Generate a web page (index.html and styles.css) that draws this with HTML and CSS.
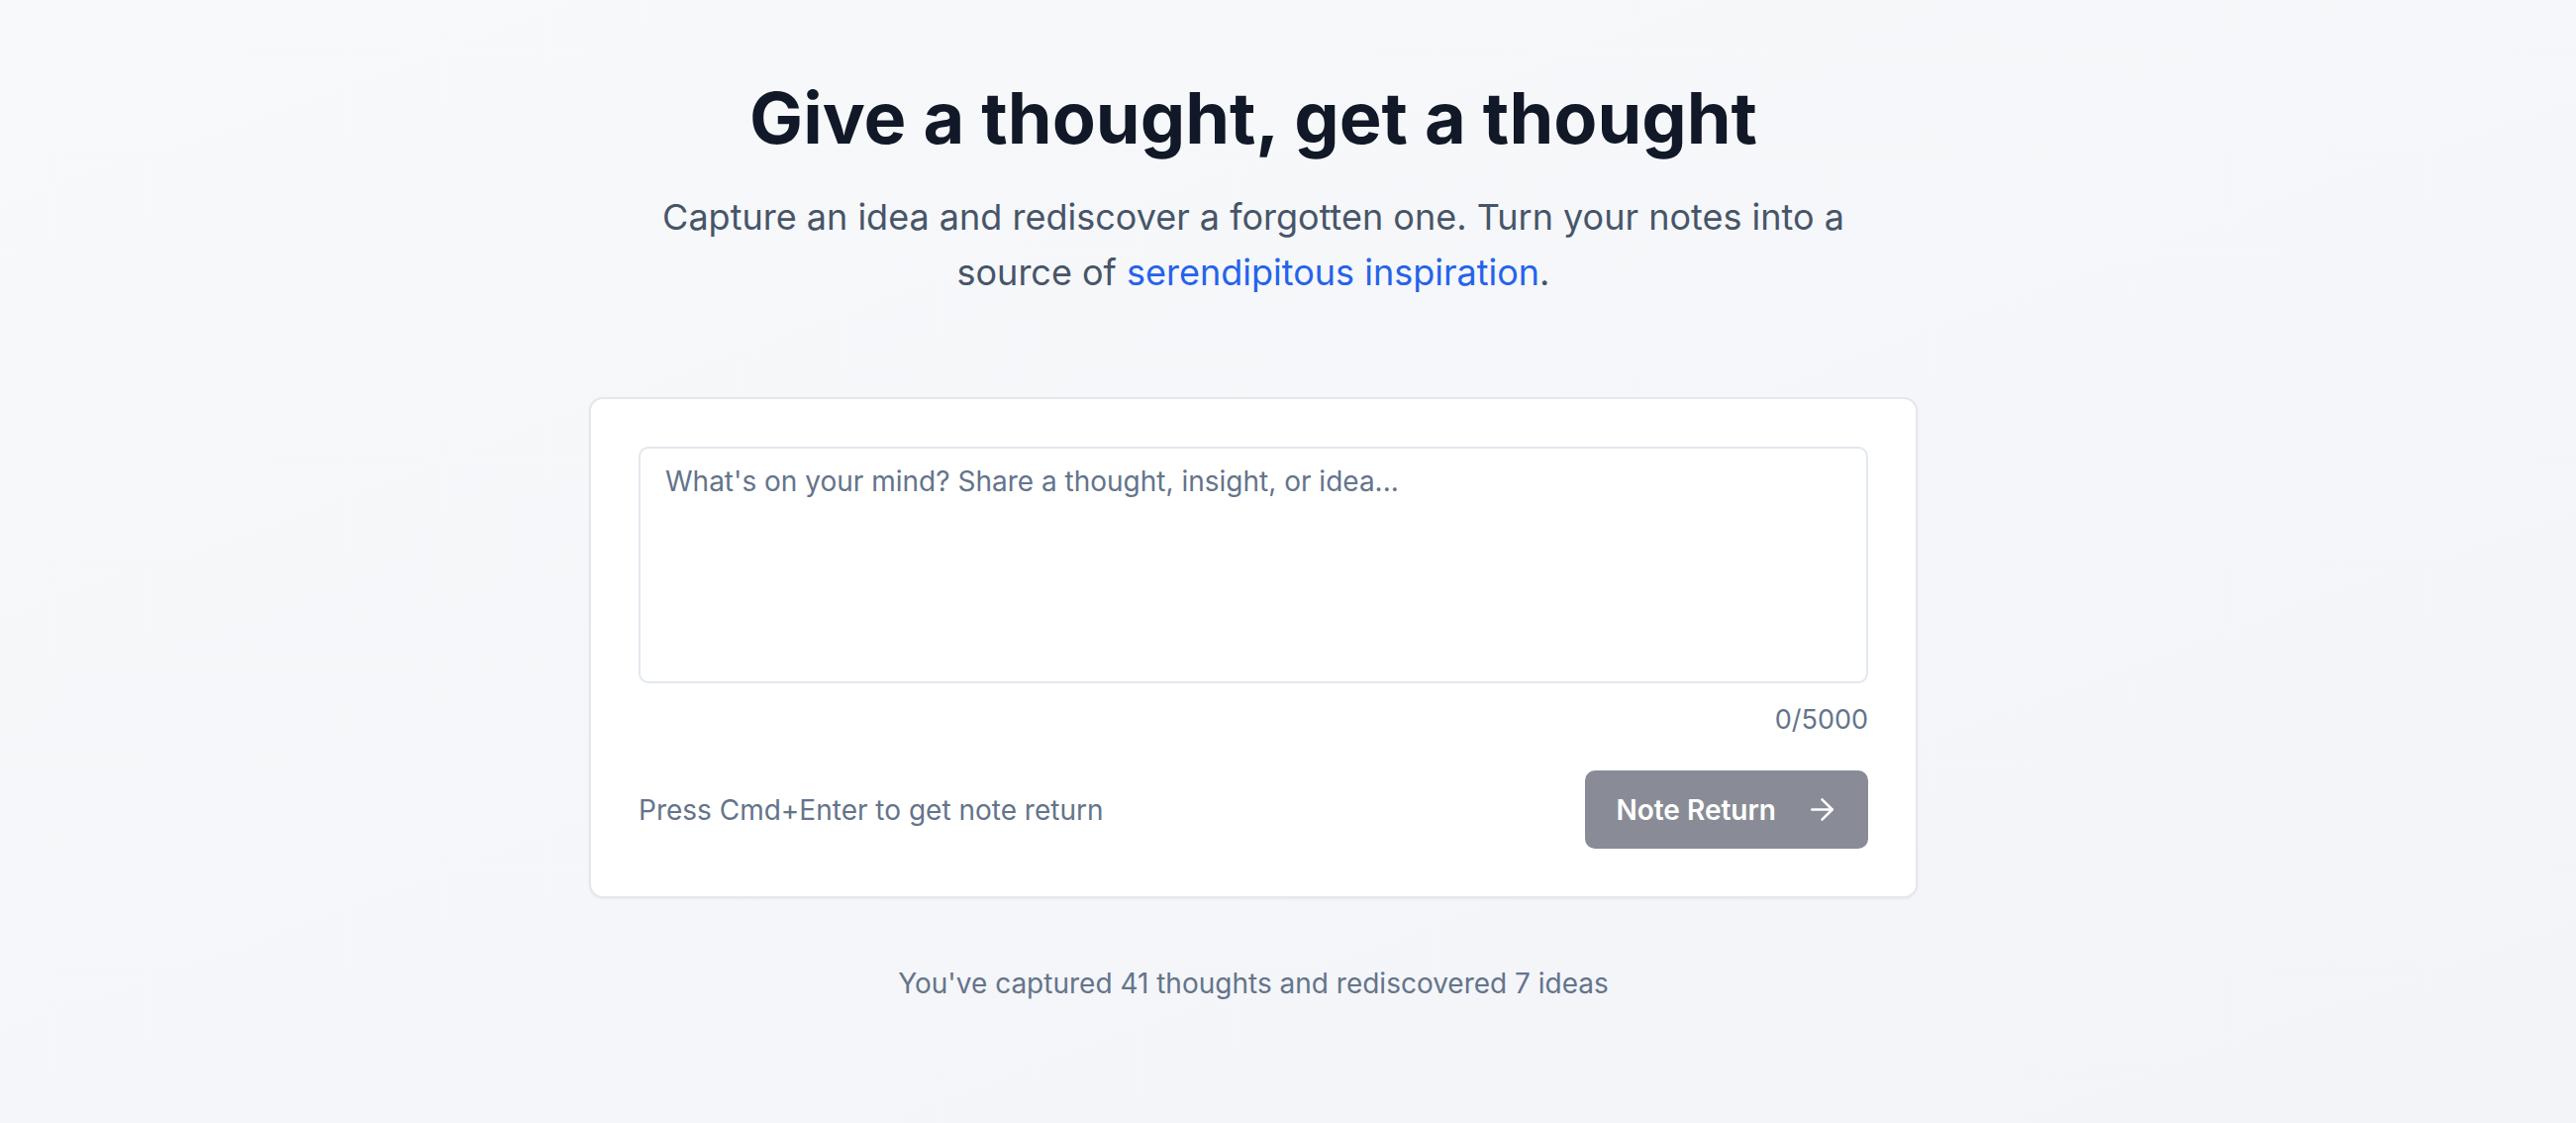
FILE: index.html
```html
<!DOCTYPE html>
<html lang="en">
<head>
<meta charset="utf-8">
<title>Give a thought, get a thought</title>
<link rel="stylesheet" href="styles.css">
</head>
<body>
<main class="page">
  <header class="hero">
    <h1 class="title">Give a thought, get a thought</h1>
    <p class="subtitle">Capture an idea and rediscover a forgotten one. Turn your notes into a<br>source of <span class="accent">serendipitous inspiration</span>.</p>
  </header>
  <section class="card">
    <textarea class="note-input" placeholder="What's on your mind? Share a thought, insight, or idea..."></textarea>
    <div class="counter">0/5000</div>
    <div class="actions">
      <span class="hint">Press Cmd+Enter to get note return</span>
      <button class="submit" type="button">
        <span>Note Return</span>
        <svg class="arrow" viewBox="0 0 24 24" fill="none" stroke="currentColor" stroke-width="1.75" stroke-linecap="round" stroke-linejoin="round"><path d="M5 12h14"/><path d="m12 5 7 7-7 7"/></svg>
      </button>
    </div>
  </section>
  <p class="stats">You've captured 41 thoughts and rediscovered 7 ideas</p>
</main>
</body>
</html>
```

FILE: styles.css
```css
* { box-sizing: border-box; }
html, body { margin: 0; height: 100%; }
body {
  font-family: "Inter", "Noto Sans", "Liberation Sans", sans-serif;
  background: linear-gradient(160deg, #f8f9fb 0%, #f5f6f9 60%, #f2f4f8 100%);
  min-height: 1134px;
}
.page {
  display: flex;
  flex-direction: column;
  align-items: center;
  padding: 76px 70px 0 0;
}
.hero { text-align: center; }
.title {
  margin: 0;
  font-size: 72px;
  line-height: 86px;
  font-weight: 700;
  letter-spacing: 0;
  color: #111827;
}
.subtitle {
  margin: 29px 0 0;
  font-size: 36px;
  line-height: 56px;
  color: #475569;
}
.accent { color: #2563eb; }
.card {
  margin-top: 98px;
  width: 1342px;
  background: #ffffff;
  border: 2px solid #e5e7eb;
  border-radius: 14px;
  padding: 48px;
  box-shadow: 0 1px 3px rgba(15, 23, 42, 0.05);
  display: flex;
  flex-direction: column;
}
.note-input {
  display: block;
  width: 100%;
  height: 239px;
  resize: none;
  border: 2px solid #e2e8f0;
  border-radius: 10px;
  padding: 12px 25px;
  font-family: inherit;
  font-size: 28px;
  line-height: 42px;
  color: #1f2937;
  background: #ffffff;
  outline: none;
}
.note-input::placeholder { color: #64748b; opacity: 1; }
.counter {
  margin-top: 17px;
  text-align: right;
  font-size: 27px;
  line-height: 40px;
  color: #64748b;
}
.actions {
  margin-top: 31px;
  display: flex;
  align-items: center;
  justify-content: space-between;
}
.hint {
  font-size: 28px;
  color: #64748b;
}
.submit {
  display: flex;
  align-items: center;
  gap: 29px;
  height: 79px;
  padding: 0 29px 0 31px;
  border: none;
  border-radius: 10px;
  background: #898c96;
  color: #ffffff;
  font-family: inherit;
  font-size: 28px;
  font-weight: 600;
  cursor: pointer;
}
.arrow { width: 35px; height: 35px; display: block; }
.stats {
  margin: 66px 0 0;
  font-size: 28px;
  line-height: 40px;
  color: #64748b;
}
```
